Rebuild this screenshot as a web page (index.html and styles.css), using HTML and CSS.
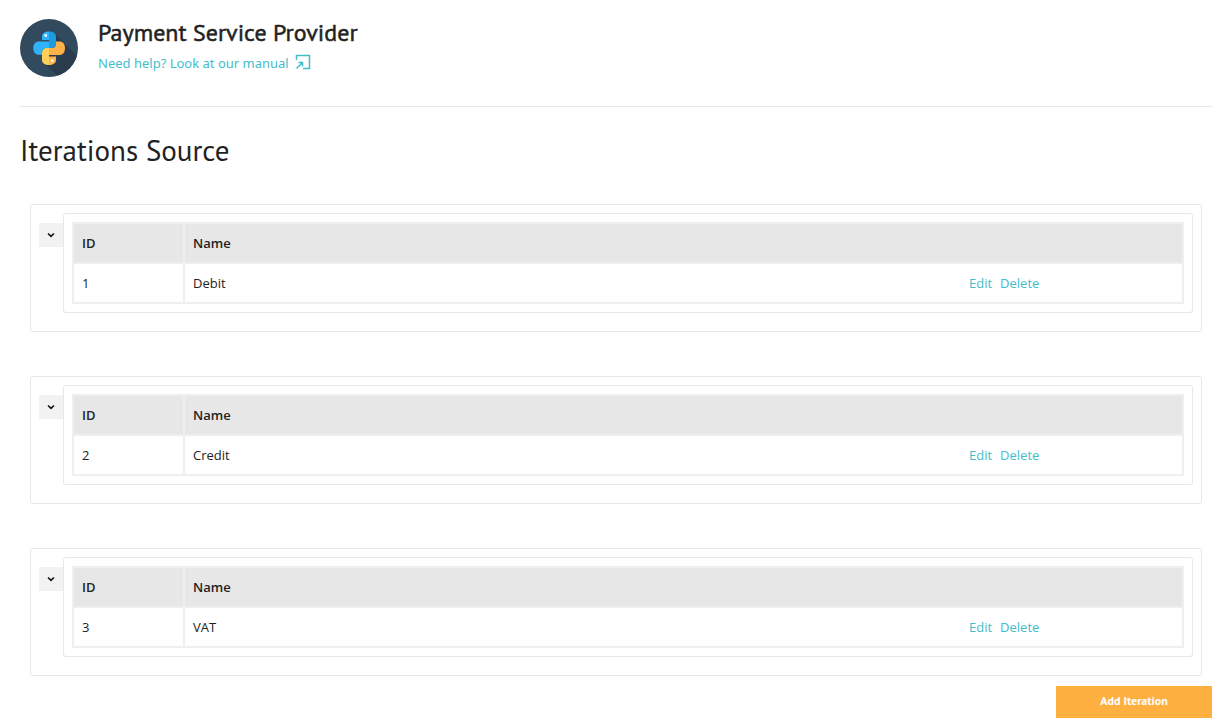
FILE: index.html
```
<!DOCTYPE html>
<html lang="en">
<head>
    <meta charset="UTF-8">
    <meta name="viewport" content="width=device-width, initial-scale=1.0">
    <title>Payment Service Provider</title>
    <link rel="stylesheet" href="styles.css">
</head>
<body>
    <header class="page-header">
        <svg class="logo" viewBox="0 0 58 58" aria-hidden="true">
            <defs>
                <clipPath id="logo-circle"><circle cx="29" cy="29" r="29"/></clipPath>
            </defs>
            <circle cx="29" cy="29" r="29" fill="#324a5e"/>
            <path clip-path="url(#logo-circle)" fill="#2b3b4e" d="M34 14L43.500 23.500L58 38V58H39L24 44L30 30Z"/>
            <!-- blue snake -->
            <path fill="#2fb4fb" d="M29 12.500c-4 0-7 1.500-7 5v3.500h7v1.500H19c-3.500 0-5.700 2.500-5.700 6.500s2.200 6.800 5.700 6.800h3V34c0-3 2-5 5-5h2z"/>
            <path fill="#1b9be0" d="M29 12.500c4 0 7 1.500 7 5V25c0 2.500-1.500 4-4 4h-3z"/>
            <!-- yellow snake -->
            <path fill="#ffcf5b" d="M29 46c-4 0-7-1.500-7-5v-7c0-3 2-5 5-5h2z"/>
            <path fill="#fdb247" d="M36 22.500h3.500c3.500 0 5.500 2.700 5.500 6.700s-2.200 6.800-5.700 6.800H29v1.500h7V41c0 3.500-3 5-7 5V29h3c2.500 0 4-1.500 4-4z"/>
            <circle cx="25.700" cy="16.500" r="1.400" fill="#fff"/>
            <circle cx="32.200" cy="41.700" r="1.400" fill="#fff"/>
        </svg>
        <div class="page-info">
            <h1 class="page-title">Payment Service Provider</h1>
            <a class="manual-link" href="#">Need help? Look at our manual
                <svg class="manual-icon" viewBox="0 0 16 16" aria-hidden="true">
                    <path d="M1.500 6V1.500h13v13H8M1.500 14.500L7 9M3.500 8.500H7.500V12.500"/>
                </svg>
            </a>
        </div>
    </header>

    <main>
        <h2 class="section-title">Iterations Source</h2>

        <div class="iterations">
            <section class="iteration">
                <button type="button" class="toggle-button" aria-label="Toggle iteration 1">
                    <svg class="toggle-icon" viewBox="0 0 8 6" aria-hidden="true"><path d="M1 1.500L4 4.300L7 1.500"/></svg>
                </button>
                <div class="iteration-content">
                    <table class="iteration-table">
                        <thead>
                            <tr><th class="col-id">ID</th><th class="col-name">Name</th><th class="col-actions"></th></tr>
                        </thead>
                        <tbody>
                            <tr>
                                <td>1</td>
                                <td class="col-name">Debit</td>
                                <td class="col-actions"><a href="#">Edit</a><a href="#">Delete</a></td>
                            </tr>
                        </tbody>
                    </table>
                </div>
            </section>

            <section class="iteration">
                <button type="button" class="toggle-button" aria-label="Toggle iteration 2">
                    <svg class="toggle-icon" viewBox="0 0 8 6" aria-hidden="true"><path d="M1 1.500L4 4.300L7 1.500"/></svg>
                </button>
                <div class="iteration-content">
                    <table class="iteration-table">
                        <thead>
                            <tr><th class="col-id">ID</th><th class="col-name">Name</th><th class="col-actions"></th></tr>
                        </thead>
                        <tbody>
                            <tr>
                                <td>2</td>
                                <td class="col-name">Credit</td>
                                <td class="col-actions"><a href="#">Edit</a><a href="#">Delete</a></td>
                            </tr>
                        </tbody>
                    </table>
                </div>
            </section>

            <section class="iteration">
                <button type="button" class="toggle-button" aria-label="Toggle iteration 3">
                    <svg class="toggle-icon" viewBox="0 0 8 6" aria-hidden="true"><path d="M1 1.500L4 4.300L7 1.500"/></svg>
                </button>
                <div class="iteration-content">
                    <table class="iteration-table">
                        <thead>
                            <tr><th class="col-id">ID</th><th class="col-name">Name</th><th class="col-actions"></th></tr>
                        </thead>
                        <tbody>
                            <tr>
                                <td>3</td>
                                <td class="col-name">VAT</td>
                                <td class="col-actions"><a href="#">Edit</a><a href="#">Delete</a></td>
                            </tr>
                        </tbody>
                    </table>
                </div>
            </section>
        </div>

        <div class="page-actions">
            <button type="button" class="add-button">Add Iteration</button>
        </div>
    </main>
</body>
</html>
```
FILE: styles.css
```
* {
    box-sizing: border-box;
}

body {
    margin: 0;
    padding: 18px 12px 0 20px;
    font-family: "Segoe UI", "Open Sans", "Noto Sans", sans-serif;
    font-size: 13px;
    line-height: 20px;
    color: #222;
    background-color: #fff;
}

a {
    color: #44bdcb;
    text-decoration: none;
}

a:hover {
    text-decoration: underline;
}

/* Header */
.page-header {
    display: flex;
    gap: 20px;
    height: 89px;
    border-bottom: 1px solid #e8e8e8;
}

.logo {
    width: 58px;
    height: 58px;
    margin-top: 1px;
}

.page-title {
    margin: 0 0 5px;
    font-family: "PT Sans", "Noto Sans", sans-serif;
    font-size: 24px;
    font-weight: 500;
    line-height: 30px;
    -webkit-text-stroke: 0.5px #222;
}

.manual-link {
    display: flex;
    align-items: center;
    gap: 6px;
    font-family: "Segoe UI", "Noto Sans", sans-serif;
}

.manual-icon {
    width: 16px;
    height: 16px;
    margin-bottom: 2px;
    fill: none;
    stroke: #44bdcb;
    stroke-width: 1.5;
}

.section-title {
    margin: 23px 0 34px;
    font-family: "PT Sans", "Noto Sans", sans-serif;
    font-size: 29px;
    font-weight: 400;
    line-height: 40px;
}

/* Iteration boxes */
.iterations {
    display: flex;
    flex-direction: column;
    gap: 44px;
    padding: 0 10px;
}

.iteration {
    display: flex;
    align-items: flex-start;
    padding: 8px 8px 18px;
    border: 1px solid #e8e8e8;
    border-radius: 3px;
}

.toggle-button {
    display: flex;
    align-items: center;
    justify-content: center;
    width: 24px;
    height: 24px;
    margin-top: 10px;
    padding: 0;
    border: none;
    background-color: #f2f2f2;
    cursor: pointer;
}

.toggle-icon {
    width: 8px;
    height: 6px;
    fill: none;
    stroke: #111;
    stroke-width: 1.6;
}

.iteration-content {
    flex: 1;
    padding: 8px;
    border: 1px solid #e8e8e8;
    border-radius: 3px;
}

.iteration-table {
    width: 100%;
    table-layout: fixed;
    border-collapse: collapse;
    border: 2px solid #efefef;
}

.iteration-table th,
.iteration-table td {
    height: 40px;
    padding: 0 8px;
    border: 2px solid #efefef;
    text-align: left;
}

.iteration-table th {
    font-weight: 600;
    background-color: #e7e7e7;
}

.iteration-table .col-id {
    width: 10%;
}

.iteration-table .col-name {
    width: 70%;
    border-right: none;
}

.iteration-table .col-actions {
    width: 20%;
    border-left: none;
}

.col-actions a {
    margin-right: 8px;
}

/* Footer button */
.page-actions {
    display: flex;
    justify-content: flex-end;
    margin-top: 10px;
}

.add-button {
    width: 156px;
    height: 32px;
    padding: 0 0 3px;
    border: none;
    font-family: "PT Sans", "Noto Sans", sans-serif;
    font-size: 12px;
    font-weight: 600;
    color: #fff;
    background-color: #fdb040;
    cursor: pointer;
}
```
